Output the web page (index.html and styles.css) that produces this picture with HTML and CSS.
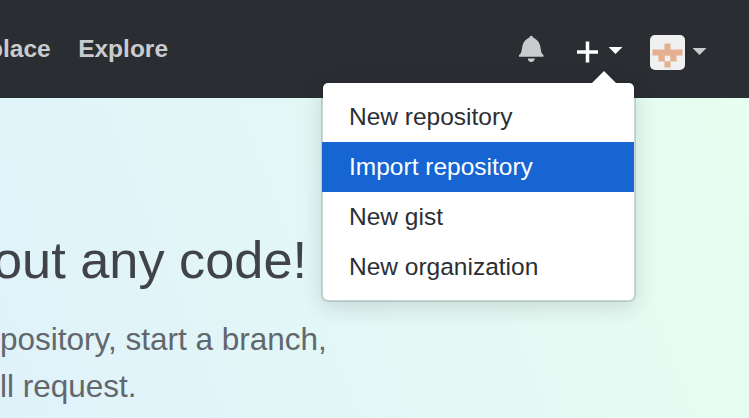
FILE: index.html
```html
<!DOCTYPE html>
<html lang="en">
<head>
<meta charset="utf-8">
<title>GitHub</title>
<link rel="stylesheet" href="styles.css">
</head>
<body>
<header class="header">
  <nav class="nav">
    <a class="nav-link">place</a>
    <a class="nav-link">Explore</a>
  </nav>
  <div class="actions">
    <svg class="bell" viewBox="0 0 14 16"><path d="M13.99 11.991v1H0v-1l.73-.58c.769-.769.809-2.547 1.189-4.416.77-3.767 4.077-4.996 4.077-4.996 0-.55.45-1 .999-1 .55 0 1 .45 1 1 0 0 3.387 1.229 4.156 4.996.38 1.879.42 3.657 1.19 4.417l.659.58h-.01zM6.995 15.99c1.11 0 1.999-.89 1.999-1.999H4.996c0 1.11.89 1.999 1.999 1.999z"/></svg>
    <div class="create">
      <svg class="plus" viewBox="0 0 12 16"><path d="M12 9H7v5H5V9H0V7h5V2h2v5h5v2z"/></svg>
      <span class="caret caret-active"></span>
      <div class="menu">
        <a class="item">New repository</a>
        <a class="item item-active">Import repository</a>
        <a class="item">New gist</a>
        <a class="item">New organization</a>
      </div>
    </div>
    <div class="profile">
      <svg class="avatar" viewBox="0 0 35 35"><rect width="35" height="35" fill="#f0f0f0"/><path fill="#e5b092" d="M14.5 8.5h6v6h12v6h-6v6h-6v6h-6v-6h-6v-6h-6v-6h12zM14.8 20.8v5.4h5.4v-5.4z" fill-rule="evenodd"/></svg>
      <span class="caret"></span>
    </div>
  </div>
</header>
<main class="hero">
  <h1 class="title">out any code!</h1>
  <p class="lead">pository, start a branch,<br>ll request.</p>
</main>
</body>
</html>
```
FILE: styles.css
```css
* { box-sizing: border-box; }
body {
  margin: 0;
  width: 749px;
  height: 418px;
  overflow: hidden;
  font-family: "Liberation Sans", Arial, sans-serif;
}
.header {
  display: flex;
  justify-content: space-between;
  height: 98px;
  padding-right: 42.5px;
  background: #2a2d32;
}
.nav {
  display: flex;
  gap: 27.5px;
  margin-left: -12px;
  padding-top: 34px;
}
.nav-link {
  color: #cacbcc;
  font-size: 24.5px;
  font-weight: 700;
  line-height: 30px;
}
.actions { display: flex; }
.bell {
  width: 24.5px;
  height: 28px;
  margin: 34px 33px 0 0;
  fill: #c9cacb;
}
.create {
  position: relative;
  display: flex;
  width: 46px;
  height: 60px;
  margin-right: 27.4px;
}
.plus {
  width: 21px;
  height: 28px;
  margin: 38px 11px 0 0;
  fill: #fff;
}
.caret {
  width: 14px;
  height: 7px;
  margin-top: 48px;
  background: #c9cacb;
  clip-path: polygon(0 0, 100% 0, 50% 100%);
}
.caret-active {
  margin-top: 47px;
  background: #fff;
}
.profile { display: flex; }
.avatar {
  width: 35px;
  height: 35px;
  margin: 35px 7.6px 0 0;
  border-radius: 5px;
}
.menu {
  position: absolute;
  top: 81px;
  right: -13.5px;
  z-index: 1;
  width: 315px;
  height: 221px;
  padding: 9px 0;
  border: 2px solid rgba(27, 31, 35, .15);
  border-radius: 7px;
  background: #fff;
  background-clip: padding-box;
  box-shadow: 0 5px 21px rgba(27, 31, 35, .15);
}
.menu::before {
  content: "";
  position: absolute;
  top: -12px;
  right: 18px;
  width: 24px;
  height: 12px;
  background: #fff;
  clip-path: polygon(50% 0, 100% 100%, 0 100%);
}
.item {
  display: block;
  height: 50px;
  padding-left: 26px;
  color: #2b2f34;
  font-size: 24.5px;
  line-height: 50px;
}
.item-active {
  margin-left: -1px;
  padding-left: 27px;
  color: #fff;
  background: #1665d3;
}
.hero {
  height: 320px;
  padding-top: 129px;
  background: linear-gradient(69deg, #dff2fb, #e8fef0);
}
.title {
  margin: 0 0 23px -7px;
  color: #404448;
  font-size: 52.3px;
  font-weight: 400;
  line-height: 66px;
}
.lead {
  margin: 0;
  color: #61676c;
  font-size: 31.5px;
  line-height: 47px;
}
```
